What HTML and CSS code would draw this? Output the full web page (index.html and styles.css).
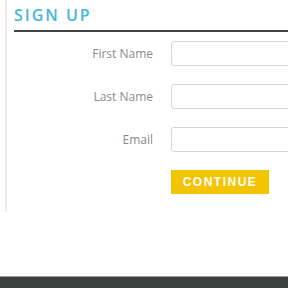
FILE: index.html
```html
<!DOCTYPE html>
<html lang="en">
<head>
    <meta charset="UTF-8">
    <title>Sign Up</title>
    <meta name="viewport" content="width=device-width, initial-scale=1.0">
    <link rel="stylesheet" href="styles.css">
</head>
<body>
    <!-- signup panel -->
    <div class="panel">
        <h2 class="panel-title">SIGN UP</h2>

        <form class="signup-form" onsubmit="return false">
            <label for="firstName">First Name</label>
            <input type="text" id="firstName">

            <label for="lastName">Last Name</label>
            <input type="text" id="lastName">

            <label for="email">Email</label>
            <input type="email" id="email">

            <span></span>
            <button type="submit">CONTINUE</button>
        </form>
    </div>

    <!-- footer strip -->
    <div class="footer"></div>
</body>
</html>
```

FILE: styles.css
```css
:root {
    --accent: #45b5e0;
    --rule: #444;
    --label: #8a8a8a;
    --field-border: #d6d6d6;
    --button-bg: #f5c400;
    --footer-bg: #3e3f3f;
}

* {
    box-sizing: border-box;
}

html, body {
    height: 100%;
}

body {
    margin: 0;
    font-family: 'Open Sans', 'Liberation Sans', sans-serif;
    background: #fff;
    overflow: hidden;
    display: flex;
    flex-direction: column;
}

.panel {
    margin-left: 5px;
    padding-left: 7px;
    height: 212px;
    border-left: 2px solid #ececec;
    overflow: hidden;
}

.panel-title {
    margin: 0;
    padding-top: 4px;
    height: 32px;
    font-size: 16px;
    font-weight: 600;
    letter-spacing: 2px;
    color: var(--accent);
    border-bottom: 2px solid var(--rule);
}

.signup-form {
    display: grid;
    grid-template-columns: 139px 1fr;
    column-gap: 18px;
    row-gap: 18px;
    padding-top: 9px;
    align-items: center;
}

.signup-form label {
    text-align: right;
    font-size: 12px;
    color: var(--label);
}

.signup-form input {
    width: 160px;
    height: 25px;
    border: 1px solid var(--field-border);
    border-radius: 3px;
    font-family: inherit;
}

.signup-form button {
    justify-self: start;
    width: 98px;
    height: 24px;
    padding: 0;
    border: none;
    background: var(--button-bg);
    color: #fff;
    font-family: 'Liberation Sans', Arial, sans-serif;
    font-size: 12px;
    font-weight: bold;
    letter-spacing: 1.5px;
    cursor: pointer;
}

.footer {
    margin-top: auto;
    height: 12px;
    background: var(--footer-bg);
    border-top: 1px solid #9a9a9a;
}
```
